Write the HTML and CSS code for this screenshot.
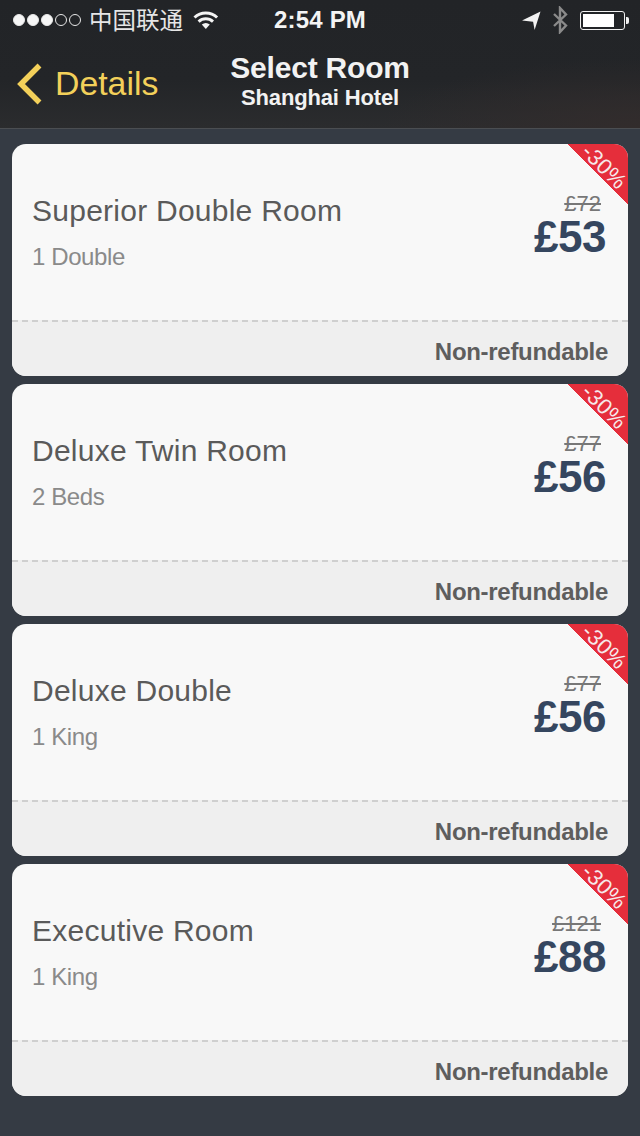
FILE: index.html
```html
<!DOCTYPE html>
<html lang="en">
<head>
<meta charset="utf-8">
<title>Select Room</title>
<link rel="stylesheet" href="styles.css">
</head>
<body>
<header class="top">
  <div class="status">
    <div class="status-left">
      <span class="signal"><i class="dot on"></i><i class="dot on"></i><i class="dot on"></i><i class="dot"></i><i class="dot"></i></span>
      <span class="carrier">中国联通</span>
      <svg class="wifi" width="26" height="20" viewBox="0 0 26 20"><path d="M1.500 7.500C7.800 1.500 17.800 1.500 24.100 7.500" fill="none" stroke="#f4f4f4" stroke-width="3"/><path d="M5.600 11.600C9.800 7.800 15.800 7.800 20 11.600" fill="none" stroke="#f4f4f4" stroke-width="3"/><path d="M8.800 14.500C11.300 12.500 14.300 12.500 16.800 14.500L12.800 19Z" fill="#f4f4f4"/></svg>
    </div>
    <span class="time">2:54 PM</span>
    <div class="status-right">
      <svg class="arrow" width="20" height="20" viewBox="0 0 20 20"><path d="M1 10.500L19.500 1.500L13.600 20L12.100 11.800Z" fill="#f2f2f2"/></svg>
      <svg width="16" height="28" viewBox="0 0 16 28"><path d="M2 8L14 19.500L8 26V2L14 8.500L2 20" fill="none" stroke="#8a8a8a" stroke-width="2.400"/></svg>
      <span class="battery"><span class="charge"></span></span>
    </div>
  </div>
  <nav class="nav">
    <a class="back">
      <svg width="26" height="42" viewBox="0 0 26 42"><path d="M23.500 2.500L5 21L23.500 39.500" fill="none" stroke="#f3d05a" stroke-width="5.500"/></svg>
      <span>Details</span>
    </a>
    <div class="heading">
      <h1>Select Room</h1>
      <p>Shanghai Hotel</p>
    </div>
  </nav>
</header>
<main class="rooms">
  <article class="card">
    <span class="ribbon"><span>-30%</span></span>
    <div class="card-body">
      <div class="room"><h2>Superior Double Room</h2><p>1 Double</p></div>
      <div class="price"><s>£72</s><strong>£53</strong></div>
    </div>
    <div class="card-foot">Non-refundable</div>
  </article>
  <article class="card">
    <span class="ribbon"><span>-30%</span></span>
    <div class="card-body">
      <div class="room"><h2>Deluxe Twin Room</h2><p>2 Beds</p></div>
      <div class="price"><s>£77</s><strong>£56</strong></div>
    </div>
    <div class="card-foot">Non-refundable</div>
  </article>
  <article class="card">
    <span class="ribbon"><span>-30%</span></span>
    <div class="card-body">
      <div class="room"><h2>Deluxe Double</h2><p>1 King</p></div>
      <div class="price"><s>£77</s><strong>£56</strong></div>
    </div>
    <div class="card-foot">Non-refundable</div>
  </article>
  <article class="card">
    <span class="ribbon"><span>-30%</span></span>
    <div class="card-body">
      <div class="room"><h2>Executive Room</h2><p>1 King</p></div>
      <div class="price"><s>£121</s><strong>£88</strong></div>
    </div>
    <div class="card-foot">Non-refundable</div>
  </article>
</main>
</body>
</html>
```
FILE: styles.css
```css
* { box-sizing: border-box; }
html, body { margin: 0; padding: 0; }
body {
  width: 640px;
  height: 1136px;
  overflow: hidden;
  background: #353b44;
  font-family: "Liberation Sans", Arial, sans-serif;
}
.top {
  height: 129px;
  background: radial-gradient(ellipse 260px 70px at 100% 100%, #322c2c, transparent), linear-gradient(#222427 0, #232528 80px, #2b2c2e 128px);
  border-bottom: 1px solid #4b4e52;
}
.status {
  height: 40px;
  display: grid;
  grid-template-columns: 1fr auto 1fr;
  align-items: center;
  padding: 0 13px;
  color: #f4f4f4;
}
.status-left { display: flex; align-items: center; }
.signal { display: flex; gap: 2px; }
.dot {
  width: 12px;
  height: 12px;
  border-radius: 50%;
  border: 1px solid #e8e8e8;
}
.dot.on { background: #f6f6f6; }
.carrier {
  margin-left: 8px;
  font: 23.500px/1 "Noto Sans CJK SC", sans-serif;
  color: #e6e6e6;
}
.wifi { margin-left: 10px; margin-top: -1px; }
.time { font-size: 24px; font-weight: 700; letter-spacing: 0.200px; }
.status-right { display: flex; align-items: center; justify-content: flex-end; gap: 9px; }
.arrow { margin-right: 2px; }
.battery {
  position: relative;
  width: 45px;
  height: 19px;
  margin-left: 3px;
  margin-right: 2px;
  padding: 2px;
  border: 1px solid #f0f0f0;
  border-radius: 3px;
}
.battery::after {
  content: "";
  position: absolute;
  right: -5px;
  top: 5px;
  width: 3px;
  height: 7px;
  background: #f0f0f0;
  border-radius: 0 2px 2px 0;
}
.charge { display: block; width: 31px; height: 13px; background: #fff; }
.nav {
  position: relative;
  height: 88px;
  display: flex;
  align-items: center;
}
.back {
  display: flex;
  align-items: center;
  gap: 13px;
  margin-left: 16px;
  margin-top: -1px;
  color: #f3d05a;
  font-size: 33.800px;
}
.heading {
  position: absolute;
  left: 0;
  right: 0;
  top: 10px;
  text-align: center;
  color: #f2f2f2;
}
.heading h1 { margin: 0; font-size: 30px; line-height: 36px; font-weight: 700; letter-spacing: -0.200px; }
.heading p { margin: 0; font-size: 22px; line-height: 23px; font-weight: 700; letter-spacing: -0.150px; }
.rooms {
  display: flex;
  flex-direction: column;
  gap: 8px;
  padding: 15px 12px 0;
}
.card {
  position: relative;
  height: 232px;
  display: flex;
  flex-direction: column;
  overflow: hidden;
  border-radius: 14px;
  background: #f8f8f8;
}
.card-body {
  flex: 1;
  display: flex;
  justify-content: space-between;
  padding: 48px 22px 0 20px;
}
.room h2 { margin: 0; font-size: 30px; line-height: 38px; font-weight: 400; color: #5a5a5a; letter-spacing: 0.250px; }
.room p { margin: 13px 0 0; font-size: 24px; line-height: 28px; color: #8a8a8a; letter-spacing: -0.400px; }
.price { display: flex; flex-direction: column; align-items: flex-end; }
.price s { margin-top: 1px; margin-right: 5px; font-size: 22px; line-height: 22px; color: #777; }
.price strong { font-size: 44px; line-height: 44px; color: #35465f; letter-spacing: -0.500px; }
.card-foot {
  height: 56px;
  border-top: 2px dashed #cfcfcf;
  background: #efefef;
  padding: 16px 20px 0 0;
  text-align: right;
  font-size: 24px;
  line-height: 28px;
  font-weight: 700;
  color: #5e5e5e;
  letter-spacing: -0.300px;
}
.ribbon {
  position: absolute;
  top: 0;
  right: 0;
  width: 60px;
  height: 60px;
  background: linear-gradient(to top right, transparent 50%, #e52e3b 50%);
}
.ribbon span {
  position: absolute;
  left: 8px;
  top: 12px;
  width: 56px;
  text-align: center;
  font-size: 22px;
  line-height: 22px;
  letter-spacing: 0.500px;
  color: #f6e9ea;
  transform: rotate(45deg);
}
```
